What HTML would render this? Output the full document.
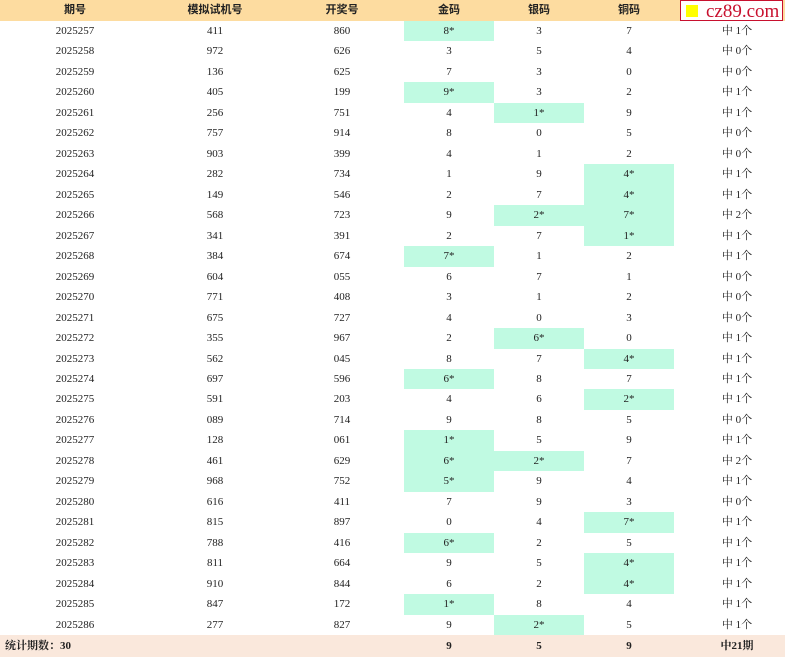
<!DOCTYPE html>
<html><head><meta charset="utf-8"><style>
body{margin:0;width:785px;height:657px;overflow:hidden;background:#fff;font-family:"Liberation Serif","Noto Serif CJK SC",serif;font-size:11px;color:#222;position:relative}
.r{position:absolute;left:0;width:785px;height:20.47px;display:flex;align-items:center}
.r div{text-align:center;height:100%;line-height:20.47px;flex-shrink:0}
.c1{width:150px}.c2{width:130px}.c3{width:124px}.c4,.c5,.c6{width:90px}.c7{width:96px;padding-left:15px}
.h{background:#c0fae2}
.hd{top:0;height:21px;background:#fddca0;font-family:"Liberation Sans","Noto Sans CJK SC",sans-serif;font-weight:bold;font-size:11px}
.hd div{line-height:21px}
.ft{top:635px;height:22px;background:#fae8dc;font-weight:bold}
.ft div{line-height:22px}
.logo{position:absolute;left:680px;top:0;width:103px;height:21px;border:1px solid #c8102e;background:#fff;color:#c8102e;font-family:"Liberation Serif",serif;font-size:19px;line-height:21px;box-sizing:border-box;padding-left:25px}
.logo i{position:absolute;left:5px;top:4px;width:12px;height:12px;background:#ff0}
</style></head><body>
<div class="r hd"><div class="c1">期号</div><div class="c2">模拟试机号</div><div class="c3">开奖号</div><div class="c4">金码</div><div class="c5">银码</div><div class="c6">铜码</div><div class="c7"></div></div>
<div class="logo"><i></i>cz89.com</div>
<div class="r ft"><div style="width:404px;text-align:left;padding-left:5px;box-sizing:border-box">统计期数：30</div><div class="c4">9</div><div class="c5">5</div><div class="c6">9</div><div class="c7">中21期</div></div>
<div class="r" style="top:21px"><div class="c1">2025257</div><div class="c2">411</div><div class="c3">860</div><div class="c4 h">8*</div><div class="c5">3</div><div class="c6">7</div><div class="c7">中 1个</div></div>
<div class="r" style="top:41.47px"><div class="c1">2025258</div><div class="c2">972</div><div class="c3">626</div><div class="c4">3</div><div class="c5">5</div><div class="c6">4</div><div class="c7">中 0个</div></div>
<div class="r" style="top:61.94px"><div class="c1">2025259</div><div class="c2">136</div><div class="c3">625</div><div class="c4">7</div><div class="c5">3</div><div class="c6">0</div><div class="c7">中 0个</div></div>
<div class="r" style="top:82.41px"><div class="c1">2025260</div><div class="c2">405</div><div class="c3">199</div><div class="c4 h">9*</div><div class="c5">3</div><div class="c6">2</div><div class="c7">中 1个</div></div>
<div class="r" style="top:102.88px"><div class="c1">2025261</div><div class="c2">256</div><div class="c3">751</div><div class="c4">4</div><div class="c5 h">1*</div><div class="c6">9</div><div class="c7">中 1个</div></div>
<div class="r" style="top:123.35px"><div class="c1">2025262</div><div class="c2">757</div><div class="c3">914</div><div class="c4">8</div><div class="c5">0</div><div class="c6">5</div><div class="c7">中 0个</div></div>
<div class="r" style="top:143.82px"><div class="c1">2025263</div><div class="c2">903</div><div class="c3">399</div><div class="c4">4</div><div class="c5">1</div><div class="c6">2</div><div class="c7">中 0个</div></div>
<div class="r" style="top:164.29px"><div class="c1">2025264</div><div class="c2">282</div><div class="c3">734</div><div class="c4">1</div><div class="c5">9</div><div class="c6 h">4*</div><div class="c7">中 1个</div></div>
<div class="r" style="top:184.76px"><div class="c1">2025265</div><div class="c2">149</div><div class="c3">546</div><div class="c4">2</div><div class="c5">7</div><div class="c6 h">4*</div><div class="c7">中 1个</div></div>
<div class="r" style="top:205.23px"><div class="c1">2025266</div><div class="c2">568</div><div class="c3">723</div><div class="c4">9</div><div class="c5 h">2*</div><div class="c6 h">7*</div><div class="c7">中 2个</div></div>
<div class="r" style="top:225.7px"><div class="c1">2025267</div><div class="c2">341</div><div class="c3">391</div><div class="c4">2</div><div class="c5">7</div><div class="c6 h">1*</div><div class="c7">中 1个</div></div>
<div class="r" style="top:246.17px"><div class="c1">2025268</div><div class="c2">384</div><div class="c3">674</div><div class="c4 h">7*</div><div class="c5">1</div><div class="c6">2</div><div class="c7">中 1个</div></div>
<div class="r" style="top:266.64px"><div class="c1">2025269</div><div class="c2">604</div><div class="c3">055</div><div class="c4">6</div><div class="c5">7</div><div class="c6">1</div><div class="c7">中 0个</div></div>
<div class="r" style="top:287.11px"><div class="c1">2025270</div><div class="c2">771</div><div class="c3">408</div><div class="c4">3</div><div class="c5">1</div><div class="c6">2</div><div class="c7">中 0个</div></div>
<div class="r" style="top:307.58px"><div class="c1">2025271</div><div class="c2">675</div><div class="c3">727</div><div class="c4">4</div><div class="c5">0</div><div class="c6">3</div><div class="c7">中 0个</div></div>
<div class="r" style="top:328.05px"><div class="c1">2025272</div><div class="c2">355</div><div class="c3">967</div><div class="c4">2</div><div class="c5 h">6*</div><div class="c6">0</div><div class="c7">中 1个</div></div>
<div class="r" style="top:348.52px"><div class="c1">2025273</div><div class="c2">562</div><div class="c3">045</div><div class="c4">8</div><div class="c5">7</div><div class="c6 h">4*</div><div class="c7">中 1个</div></div>
<div class="r" style="top:368.99px"><div class="c1">2025274</div><div class="c2">697</div><div class="c3">596</div><div class="c4 h">6*</div><div class="c5">8</div><div class="c6">7</div><div class="c7">中 1个</div></div>
<div class="r" style="top:389.46px"><div class="c1">2025275</div><div class="c2">591</div><div class="c3">203</div><div class="c4">4</div><div class="c5">6</div><div class="c6 h">2*</div><div class="c7">中 1个</div></div>
<div class="r" style="top:409.93px"><div class="c1">2025276</div><div class="c2">089</div><div class="c3">714</div><div class="c4">9</div><div class="c5">8</div><div class="c6">5</div><div class="c7">中 0个</div></div>
<div class="r" style="top:430.4px"><div class="c1">2025277</div><div class="c2">128</div><div class="c3">061</div><div class="c4 h">1*</div><div class="c5">5</div><div class="c6">9</div><div class="c7">中 1个</div></div>
<div class="r" style="top:450.87px"><div class="c1">2025278</div><div class="c2">461</div><div class="c3">629</div><div class="c4 h">6*</div><div class="c5 h">2*</div><div class="c6">7</div><div class="c7">中 2个</div></div>
<div class="r" style="top:471.34px"><div class="c1">2025279</div><div class="c2">968</div><div class="c3">752</div><div class="c4 h">5*</div><div class="c5">9</div><div class="c6">4</div><div class="c7">中 1个</div></div>
<div class="r" style="top:491.81px"><div class="c1">2025280</div><div class="c2">616</div><div class="c3">411</div><div class="c4">7</div><div class="c5">9</div><div class="c6">3</div><div class="c7">中 0个</div></div>
<div class="r" style="top:512.28px"><div class="c1">2025281</div><div class="c2">815</div><div class="c3">897</div><div class="c4">0</div><div class="c5">4</div><div class="c6 h">7*</div><div class="c7">中 1个</div></div>
<div class="r" style="top:532.75px"><div class="c1">2025282</div><div class="c2">788</div><div class="c3">416</div><div class="c4 h">6*</div><div class="c5">2</div><div class="c6">5</div><div class="c7">中 1个</div></div>
<div class="r" style="top:553.22px"><div class="c1">2025283</div><div class="c2">811</div><div class="c3">664</div><div class="c4">9</div><div class="c5">5</div><div class="c6 h">4*</div><div class="c7">中 1个</div></div>
<div class="r" style="top:573.69px"><div class="c1">2025284</div><div class="c2">910</div><div class="c3">844</div><div class="c4">6</div><div class="c5">2</div><div class="c6 h">4*</div><div class="c7">中 1个</div></div>
<div class="r" style="top:594.16px"><div class="c1">2025285</div><div class="c2">847</div><div class="c3">172</div><div class="c4 h">1*</div><div class="c5">8</div><div class="c6">4</div><div class="c7">中 1个</div></div>
<div class="r" style="top:614.63px"><div class="c1">2025286</div><div class="c2">277</div><div class="c3">827</div><div class="c4">9</div><div class="c5 h">2*</div><div class="c6">5</div><div class="c7">中 1个</div></div>
</body></html>
